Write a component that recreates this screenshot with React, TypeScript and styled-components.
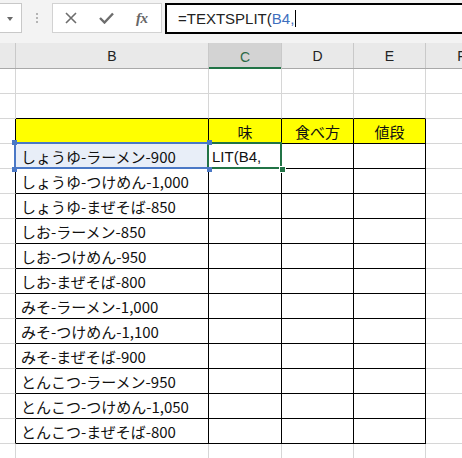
import React from "react";
import styled, { createGlobalStyle } from "styled-components";

const GlobalStyle = createGlobalStyle`
  html, body { margin: 0; padding: 0; background: #fff; }
  body { font-family: "Liberation Sans", Arial, sans-serif; overflow: hidden; }
  * { box-sizing: border-box; }
`;

const JP = `"Noto Sans CJK JP", "Liberation Sans", sans-serif`;
const GRID = "#d6d6d6";
const INK = "#000";

/* column widths A–F, each including its 1px right edge */
const COLS = [16, 193, 73, 72, 72];
const F_WIDTH = 72;

const Window = styled.div`
  width: 462px;
  height: 458px;
  overflow: hidden;
  background: #fff;
  display: flex;
  flex-direction: column;
`;

/* ---------- formula bar ---------- */
const FormulaBar = styled.div`
  height: 43px;
  flex: none;
  background: #f3f3f3;
  display: flex;
  align-items: flex-start;
  padding-top: 3px;
`;

const NameBox = styled.div`
  width: 22px;
  height: 30px;
  background: #fff;
  border: 1px solid #c8c8c8;
  border-left: none;
  display: flex;
  align-items: center;
  justify-content: center;
  padding-right: 1px;
`;

const Caret = styled.span`
  width: 0;
  height: 0;
  border-left: 3.5px solid transparent;
  border-right: 3.5px solid transparent;
  border-top: 4px solid #6a6a6a;
  margin-top: 2px;
`;

const Grip = styled.div`
  width: 2px;
  height: 30px;
  margin-left: 14px;
  margin-right: 14px;
  display: flex;
  flex-direction: column;
  align-items: center;
  justify-content: center;
  gap: 2px;
`;

const GripDot = styled.span`
  width: 2px;
  height: 2px;
  background: #b4b4b4;
`;

const FnBox = styled.div`
  width: 110px;
  height: 30px;
  background: #fff;
  border: 1px solid #d2d2d2;
  display: flex;
  align-items: center;
  padding-left: 12px;
`;

const IconSlot = styled.span<{ $w: number }>`
  width: ${(p) => p.$w}px;
  display: flex;
  align-items: center;
`;

const FxLabel = styled.span`
  font-family: "Liberation Serif", "DejaVu Serif", serif;
  font-style: italic;
  font-weight: bold;
  font-size: 15px;
  color: #666;
  letter-spacing: -0.5px;
`;

const FormulaInput = styled.div`
  flex: 1;
  height: 31px;
  margin-left: 3px;
  margin-right: -12px;
  background: #fff;
  border: 2px solid #000;
  display: flex;
  align-items: center;
  padding-left: 11px;
  font-size: 15px;
  color: #222;
  padding-bottom: 1px;
`;

const Ref = styled.span`
  color: #3f6fbe;
`;

const TextCursor = styled.span`
  display: inline-block;
  width: 1px;
  height: 17px;
  background: #000;
  margin-left: 1px;
`;

/* ---------- sheet ---------- */
const HeaderRow = styled.div`
  height: 26px;
  flex: none;
  display: flex;
  background: #e9e9e9;
  border-bottom: 1px solid #a9a9a9;
`;

const HeaderCell = styled.div<{ $w: number; $active?: boolean }>`
  width: ${(p) => p.$w}px;
  flex: none;
  border-right: 1px solid #c9c9c9;
  display: flex;
  align-items: center;
  justify-content: center;
  font-size: 14px;
  padding-top: 1px;
  color: ${(p) => (p.$active ? "#2d6a47" : "#222")};
  background: ${(p) => (p.$active ? "#d3d3d3" : "transparent")};
  box-shadow: ${(p) => (p.$active ? "inset 0 -2px 0 #217346" : "none")};
  margin-bottom: ${(p) => (p.$active ? "-1px" : "0")};
  height: ${(p) => (p.$active ? "26px" : "25px")};
`;

const Row = styled.div`
  height: 25px;
  flex: none;
  display: flex;
`;

const Cell = styled.div<{
  $w: number;
  $right?: string;
  $bottom?: string;
  $bg?: string;
  $center?: boolean;
  $latin?: boolean;
}>`
  width: ${(p) => p.$w}px;
  flex: none;
  position: relative;
  height: 25px;
  border-right: 1px solid ${(p) => p.$right || GRID};
  border-bottom: 1px solid ${(p) => p.$bottom || GRID};
  background: ${(p) => p.$bg || "#fff"};
  display: flex;
  align-items: center;
  justify-content: ${(p) => (p.$center ? "center" : "flex-start")};
  padding-left: ${(p) => (p.$center ? 0 : p.$latin ? 3 : 5)}px;
  font-family: ${(p) => (p.$latin ? `"Liberation Sans", Arial, sans-serif` : JP)};
  font-size: 15px;
  color: #111;
  white-space: nowrap;
`;

const CellFrame = styled.span<{ $color: string }>`
  position: absolute;
  top: -2px;
  left: -2px;
  right: -1px;
  bottom: -1px;
  border: 2px solid ${(p) => p.$color};
  z-index: 2;
  pointer-events: none;
`;

const Handle = styled.span<{ $color: string; $x: "l" | "r"; $y: "t" | "b"; $ring?: boolean }>`
  position: absolute;
  width: ${(p) => (p.$ring ? 7 : 5)}px;
  height: ${(p) => (p.$ring ? 7 : 5)}px;
  background: ${(p) => p.$color};
  ${(p) => (p.$ring ? "border: 1px solid #fff;" : "")}
  ${(p) => (p.$x === "l" ? "left" : "right")}: ${(p) => (p.$ring ? -5 : -4)}px;
  ${(p) => (p.$y === "t" ? "top" : "bottom")}: ${(p) => (p.$ring ? -5 : -4)}px;
  z-index: 3;
`;

const XIcon = () => (
  <svg width="12" height="12" viewBox="0 0 12 12">
    <path d="M1 1 L11 11 M11 1 L1 11" stroke="#6d6d6d" strokeWidth="1.6" fill="none" />
  </svg>
);

const CheckIcon = () => (
  <svg width="15" height="12" viewBox="0 0 15 12">
    <path d="M1 6 L5.5 10.5 L14 1.5" stroke="#6d6d6d" strokeWidth="2.4" fill="none" />
  </svg>
);

const items = [
  "しょうゆ-ラーメン-900",
  "しょうゆ-つけめん-1,000",
  "しょうゆ-まぜそば-850",
  "しお-ラーメン-850",
  "しお-つけめん-950",
  "しお-まぜそば-800",
  "みそ-ラーメン-1,000",
  "みそ-つけめん-1,100",
  "みそ-まぜそば-900",
  "とんこつ-ラーメン-950",
  "とんこつ-つけめん-1,050",
  "とんこつ-まぜそば-800",
];

const heads = ["", "味", "食べ方", "値段"];

export default function App() {
  return (
    <Window>
      <GlobalStyle />
      <FormulaBar>
        <NameBox>
          <Caret />
        </NameBox>
        <Grip>
          <GripDot />
          <GripDot />
          <GripDot />
        </Grip>
        <FnBox>
          <IconSlot $w={34}>
            <XIcon />
          </IconSlot>
          <IconSlot $w={37}>
            <CheckIcon />
          </IconSlot>
          <IconSlot $w={20}>
            <FxLabel>fx</FxLabel>
          </IconSlot>
        </FnBox>
        <FormulaInput>
          =TEXTSPLIT(<Ref>B4,</Ref>
          <TextCursor />
        </FormulaInput>
      </FormulaBar>

      <HeaderRow>
        <HeaderCell $w={COLS[0]} />
        <HeaderCell $w={COLS[1]}>B</HeaderCell>
        <HeaderCell $w={COLS[2]} $active>
          C
        </HeaderCell>
        <HeaderCell $w={COLS[3]}>D</HeaderCell>
        <HeaderCell $w={COLS[4]}>E</HeaderCell>
        <HeaderCell $w={F_WIDTH}>F</HeaderCell>
      </HeaderRow>

      {/* rows 1-2: empty, row 2 carries the top edge of the table */}
      {[0, 1].map((r) => (
        <Row key={`e${r}`}>
          {COLS.map((w, c) => (
            <Cell key={c} $w={w} $bottom={r === 1 && c > 0 ? INK : undefined} />
          ))}
          <Cell $w={F_WIDTH} />
        </Row>
      ))}

      {/* heading row */}
      <Row>
        <Cell $w={COLS[0]} $right={INK} />
        {heads.map((h, i) => (
          <Cell key={i} $w={COLS[i + 1]} $right={INK} $bottom={INK} $bg="#ffff00" $center>
            {h}
          </Cell>
        ))}
        <Cell $w={F_WIDTH} />
      </Row>

      {items.map((text, r) => (
        <Row key={text}>
          <Cell $w={COLS[0]} $right={INK} />
          <Cell $w={COLS[1]} $right={INK} $bottom={INK} $bg={r === 0 ? "#e8eef8" : undefined}>
            {text}
            {r === 0 && (
              <>
                <CellFrame $color="#4a78c6" />
                <Handle $color="#4a78c6" $x="l" $y="t" />
                <Handle $color="#4a78c6" $x="r" $y="t" />
                <Handle $color="#4a78c6" $x="l" $y="b" />
                <Handle $color="#4a78c6" $x="r" $y="b" />
              </>
            )}
          </Cell>
          <Cell $w={COLS[2]} $right={INK} $bottom={INK} $latin>
            {r === 0 && (
              <>
                LIT(B4,
                <CellFrame $color="#217346" />
                <Handle $color="#217346" $x="r" $y="b" $ring />
              </>
            )}
          </Cell>
          <Cell $w={COLS[3]} $right={INK} $bottom={INK} />
          <Cell $w={COLS[4]} $right={INK} $bottom={INK} />
          <Cell $w={F_WIDTH} />
        </Row>
      ))}

      <Row>
        {COLS.map((w, c) => (
          <Cell key={c} $w={w} />
        ))}
        <Cell $w={F_WIDTH} />
      </Row>
    </Window>
  );
}
